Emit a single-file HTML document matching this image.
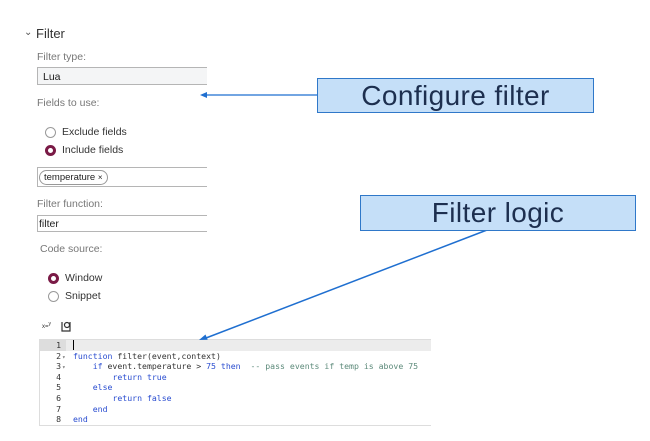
<!DOCTYPE html>
<html><head><style>
body{margin:0;width:650px;height:441px;background:#fff;position:relative;overflow:hidden;font-family:"Liberation Sans",sans-serif;color:#333}
.a{position:absolute;white-space:nowrap}
.lbl{font-size:10.5px;color:#777}
.inp{position:absolute;left:37px;width:170px;border:1px solid #b5b5b5;border-right:none;box-sizing:border-box;font-size:10.5px;color:#222}
.rad{position:absolute;width:9px;height:9px;border-radius:50%;border:1px solid #999;background:#fff}
.rad.on{border:3px solid #7a1a46;width:5px;height:5px}
.box{position:absolute;background:#c5dff8;border:1px solid #2f78c9;color:#1d2f4f;font-size:28px;letter-spacing:0.4px;text-align:center;box-sizing:border-box;line-height:33px}
.ed{position:absolute;left:39px;top:339px;width:391px;height:85px;border:1px solid #ddd;border-right:none;font-family:"DejaVu Sans Mono","Liberation Mono",monospace;font-size:8.2px;background:#fff}
.ln{height:10.6px;line-height:10.6px;position:relative}
.g{display:inline-block;width:21px;text-align:right;color:#333;padding-right:0}
.f{display:inline-block;width:12px;color:#777;font-size:6px;padding-left:1px;box-sizing:border-box}
.k{color:#2a4dd0}.c{color:#5c8a7a}.n{color:#2a4dd0}
</style></head><body>
<div class="a" style="left:24px;top:27px;font-size:10px;color:#555">&#8964;</div>
<div class="a" style="left:36px;top:26px;font-size:13px;color:#333">Filter</div>
<div class="a lbl" style="left:37px;top:51px">Filter type:</div>
<div class="inp" style="top:67px;height:18px;background:#f4f5f6;padding:3px 5px">Lua</div>
<div class="a lbl" style="left:37px;top:97px">Fields to use:</div>
<div class="rad" style="left:45px;top:127px"></div>
<div class="a" style="left:62px;top:126px;font-size:10.5px">Exclude fields</div>
<div class="rad on" style="left:45px;top:145px"></div>
<div class="a" style="left:62px;top:144px;font-size:10.5px">Include fields</div>
<div class="inp" style="top:167px;height:20px;padding:2px 1px"><span style="display:inline-block;border:1px solid #999;border-radius:8px;padding:0 4px;font-size:9.5px;line-height:13px">temperature <span style="font-size:8px">×</span></span></div>
<div class="a lbl" style="left:37px;top:198px">Filter function:</div>
<div class="inp" style="top:215px;height:17px;padding:2px 1px">filter</div>
<div class="a lbl" style="left:40px;top:243px">Code source:</div>
<div class="rad on" style="left:48px;top:273px"></div>
<div class="a" style="left:65px;top:272px;font-size:10.5px">Window</div>
<div class="rad" style="left:48px;top:291px"></div>
<div class="a" style="left:65px;top:290px;font-size:10.5px">Snippet</div>
<div class="a" style="left:42px;top:321px;font-size:6px;color:#333">x=<sup>y</sup></div>
<svg class="a" style="left:60px;top:320px" width="12" height="12"><path d="M2 2v9h8V2" fill="none" stroke="#333" stroke-width="1.2"/><circle cx="7" cy="5" r="2.5" fill="none" stroke="#333" stroke-width="1.2"/></svg>
<div class="ed">
<div class="ln" style="background:#ececec"><span class="g" style="background:#ddd;width:26px;padding-right:5px;box-sizing:border-box">1</span><span style="display:inline-block;width:7px"></span><span style="border-left:1px solid #000"> </span></div>
<div class="ln"><span class="g">2</span><span class="f">▾</span><span class="k">function</span> filter(event,context)</div>
<div class="ln"><span class="g">3</span><span class="f">▾</span>&nbsp;&nbsp;&nbsp;&nbsp;<span class="k">if</span> event.temperature &gt; <span class="n">75</span> <span class="k">then</span>&nbsp;&nbsp;<span class="c">-- pass events if temp is above 75</span></div>
<div class="ln"><span class="g">4</span><span class="f"></span>&nbsp;&nbsp;&nbsp;&nbsp;&nbsp;&nbsp;&nbsp;&nbsp;<span class="k">return true</span></div>
<div class="ln"><span class="g">5</span><span class="f"></span>&nbsp;&nbsp;&nbsp;&nbsp;<span class="k">else</span></div>
<div class="ln"><span class="g">6</span><span class="f"></span>&nbsp;&nbsp;&nbsp;&nbsp;&nbsp;&nbsp;&nbsp;&nbsp;<span class="k">return false</span></div>
<div class="ln"><span class="g">7</span><span class="f"></span>&nbsp;&nbsp;&nbsp;&nbsp;<span class="k">end</span></div>
<div class="ln"><span class="g">8</span><span class="f"></span><span class="k">end</span></div>
</div>
<svg class="a" style="left:0;top:0" width="650" height="441">
<line x1="317" y1="95" x2="206" y2="95" stroke="#1f6fd0" stroke-width="1.3"/>
<path d="M200 95l7-3v6z" fill="#1f6fd0"/>
<line x1="487" y1="230" x2="206" y2="338" stroke="#1f6fd0" stroke-width="1.5"/>
<path d="M199 340l6.5-5.5 2.2 5.3z" fill="#1f6fd0"/>
</svg>
<div class="box" style="left:317px;top:78px;width:277px;height:35px">Configure filter</div>
<div class="box" style="left:360px;top:195px;width:276px;height:36px">Filter logic</div>
</body></html>
